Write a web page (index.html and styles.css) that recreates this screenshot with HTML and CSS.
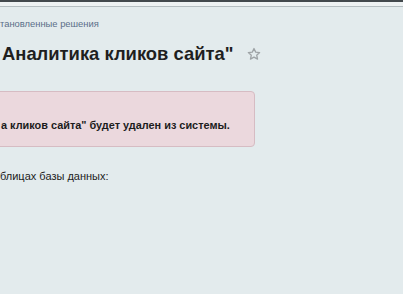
FILE: index.html
```html
<!DOCTYPE html>
<html lang="ru">
<head>
<meta charset="utf-8">
<link rel="stylesheet" href="styles.css">
</head>
<body>
<div class="topbar"></div>
<div class="topline"></div>
<div class="content">
  <div class="breadcrumbs"><a href="#">тановленные решения</a></div>
  <h1 class="title">Аналитика кликов сайта" <span class="star"><svg width="14" height="14" viewBox="0 0 24 24"><path d="M12 2.5l2.9 6.3 6.8.7-5.1 4.6 1.5 6.7L12 17.3l-6.1 3.5 1.5-6.7-5.1-4.6 6.8-.7z" fill="none" stroke="#9ea3a6" stroke-width="2.2" stroke-linejoin="round"/></svg></span></h1>
  <div class="alert">а кликов сайта" будет удален из системы.</div>
  <p class="text">блицах базы данных:</p>
</div>
</body>
</html>
```
FILE: styles.css
```css
html, body {
  margin: 0;
  padding: 0;
}
body {
  background: #e3ebed;
  font-family: "Liberation Sans", Arial, sans-serif;
  color: #222;
  overflow: hidden;
}
.topbar {
  height: 2px;
  background: #43494d;
}
.topline {
  height: 4px;
  background: #eef2f3;
  border-bottom: 1px solid #b5bec1;
}
.breadcrumbs {
  margin-top: 11px;
  font-size: 9.4px;
  line-height: 12px;
}
.breadcrumbs a {
  color: #5b6f89;
  text-decoration: none;
}
.title {
  margin: 13px 0 0 2px;
  font-size: 18.4px;
  line-height: 22px;
  font-weight: bold;
  color: #1f1f1f;
  display: flex;
  align-items: center;
}
.star {
  display: inline-flex;
  margin-left: 14px;
}
.alert {
  margin-top: 26px;
  width: 261px;
  margin-left: -6px;
  box-sizing: border-box;
  height: 56px;
  padding: 27px 0 0 6px;
  background: #ebd8dd;
  border: 1px solid #d6bcc3;
  border-radius: 4px;
  font-size: 10.9px;
  font-weight: bold;
  line-height: 13px;
  white-space: nowrap;
  color: #1c1c1c;
}
.text {
  margin: 23px 0 0 0;
  font-size: 11px;
  line-height: 13px;
  color: #222;
}
```
